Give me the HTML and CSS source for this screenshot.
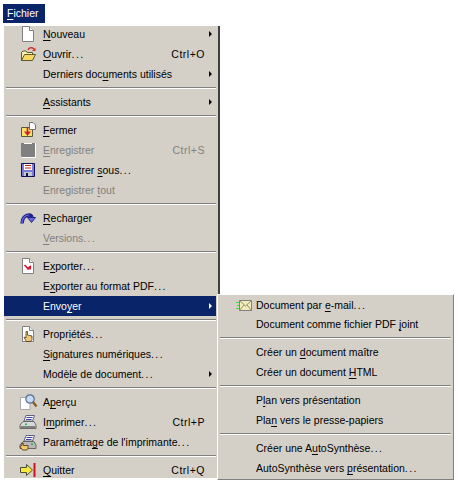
FILE: index.html
```html
<!DOCTYPE html>
<html lang="fr">
<head>
  <meta charset="UTF-8" />
  <title>Fichier</title>
  <link rel="stylesheet" href="styles.css">
</head>
<body>
  <div class="menubar"><span class="menubar-item"><u>F</u>ichier</span></div>

  <div class="menu">
    <div class="row">
      <svg class="icon" viewBox="0 0 16 16"><path d="M2.5.5H9.5L13.5 4.5V15.5H2.5Z" fill="#fff" stroke="#808080"/><path d="M9.5.5V4.5H13.5" fill="#eee" stroke="#808080"/></svg>
      <span class="label"><u>N</u>ouveau</span><i class="arrow"></i>
    </div>
    <div class="row">
      <svg class="icon" viewBox="0 0 16 16"><path d="M1.5 14.5V6.5L3 5H6L7 6.5H12.5V8.5" fill="#fff3b0" stroke="#5a5a30"/><path d="M1.5 14.5L4.5 8.5H15.5L12.5 14.5Z" fill="#f6d860" stroke="#5a5a30"/><path d="M8 4C9 1.5 12 1 14 3" fill="none" stroke="#d03030" stroke-width="1.4"/><path d="M15.5 1.5V5H12Z" fill="#d03030"/></svg>
      <span class="label"><u>O</u>uvrir<span class="dots">...</span></span><span class="shortcut">Ctrl+O</span>
    </div>
    <div class="row">
      <span class="icon"></span>
      <span class="label">Derniers doc<u>u</u>ments utilisés</span><i class="arrow"></i>
    </div>
    <div class="sep"></div>
    <div class="row">
      <span class="icon"></span>
      <span class="label"><u>A</u>ssistants</span><i class="arrow"></i>
    </div>
    <div class="sep"></div>
    <div class="row">
      <svg class="icon" viewBox="0 0 16 16"><path d="M1.5 14.5V5.5H12.5V14.5Z" fill="#f6e070" stroke="#5a5a30"/><path d="M9.5 .5H13L15.5 3V7.5H9.5Z" fill="#fff" stroke="#707070"/><path d="M7.5 5V11.5" stroke="#d02020" stroke-width="1.6"/><path d="M4 9.5H11L7.5 14Z" fill="#d02020"/></svg>
      <span class="label"><u>F</u>ermer</span>
    </div>
    <div class="row disabled">
      <svg class="icon" viewBox="0 0 16 16"><path d="M1 1H15V15H2L1 14Z" fill="#808080"/><path d="M4 1.5H12" stroke="#fff"/><path d="M15.5 1V15.5H2" fill="none" stroke="#fff"/></svg>
      <span class="label"><u>E</u>nregistrer</span><span class="shortcut">Ctrl+S</span>
    </div>
    <div class="row">
      <svg class="icon" viewBox="0 0 16 16"><path d="M1.5 1.5H14.5V14.5H1.5Z" fill="#7c7cd8" stroke="#101050"/><path d="M4 2H12V8H4Z" fill="#fff"/><path d="M5 3.5H11M5 6H11" stroke="#d02020"/><path d="M4 10H12V14H4Z" fill="#c8c8c8"/><path d="M6 11H8V14H6Z" fill="#101050"/></svg>
      <span class="label">Enregistrer <u>s</u>ous<span class="dots">...</span></span>
    </div>
    <div class="row disabled">
      <span class="icon"></span>
      <span class="label">Enregistrer <u>t</u>out</span>
    </div>
    <div class="sep"></div>
    <div class="row">
      <svg class="icon" viewBox="0 0 16 16"><path d="M2 13.5C2 8 5.5 5 9 5C11 5 12 6 12 8" fill="none" stroke="#22228c" stroke-width="3.4"/><path d="M2 13.5C2 8 5.5 5 9 5" fill="none" stroke="#6a6ae0" stroke-width="1.2"/><path d="M7.5 7.5H15.5L11.5 12.5Z" fill="#6a6ae0" stroke="#22228c"/></svg>
      <span class="label"><u>R</u>echarger</span>
    </div>
    <div class="row disabled">
      <span class="icon"></span>
      <span class="label"><u>V</u>ersions<span class="dots">...</span></span>
    </div>
    <div class="sep"></div>
    <div class="row">
      <svg class="icon" viewBox="0 0 16 16"><path d="M2.5.5H9.5L13.5 4.5V15.5H2.5Z" fill="#fff" stroke="#808080"/><path d="M9.5.5V4.5H13.5" fill="#eee" stroke="#808080"/><path d="M4.5 7L8 10.5L10 8.5" fill="none" stroke="#e01030" stroke-width="1.6"/><path d="M11 7V11.5H6.5Z" fill="#e01030"/></svg>
      <span class="label">E<u>x</u>porter<span class="dots">...</span></span>
    </div>
    <div class="row">
      <span class="icon"></span>
      <span class="label">E<u>x</u>porter au format PDF<span class="dots">...</span></span>
    </div>
    <div class="row active">
      <span class="icon"></span>
      <span class="label">Envo<u>y</u>er</span><i class="arrow"></i>
    </div>
    <div class="sep"></div>
    <div class="row">
      <svg class="icon" viewBox="0 0 16 16"><path d="M2.5.5H9.5L13.5 4.5V15.5H2.5Z" fill="#fff" stroke="#808080"/><path d="M9.5.5V4.5H13.5" fill="#eee" stroke="#808080"/><path d="M6 8V5.5H7.5V9L12 10V13.5L10.5 15.5H6.5L4 11.5L5 11L6 12Z" fill="#f2c878" stroke="#302010" stroke-width=".7"/></svg>
      <span class="label">Propr<u>i</u>étés<span class="dots">...</span></span>
    </div>
    <div class="row">
      <span class="icon"></span>
      <span class="label"><u>S</u>ignatures numériques<span class="dots">...</span></span>
    </div>
    <div class="row">
      <span class="icon"></span>
      <span class="label">Modè<u>l</u>e de document<span class="dots">...</span></span><i class="arrow"></i>
    </div>
    <div class="sep"></div>
    <div class="row">
      <svg class="icon" viewBox="0 0 16 16"><path d="M.5 3.500H10V15.500H.5Z" fill="#fff" stroke="#a8a8a8"/><circle cx="10" cy="5" r="4.200" fill="#c4ddf6" stroke="#5a6a90" stroke-width="1.200"/><path d="M13 8L16.500 12.500" stroke="#806030" stroke-width="2.400"/></svg>
      <span class="label">A<u>p</u>erçu</span>
    </div>
    <div class="row">
      <svg class="icon" viewBox="0 0 16 16"><path d="M6 1.500H14.500L12.500 7H4Z" fill="#fff" stroke="#606080"/><path d="M6.500 3.500H12.500M6 5.500H11.500" stroke="#4040a0"/><path d="M3 7.500H14L16 11V14.500H0V11Z" fill="#d8d8d8" stroke="#505050" stroke-width=".8"/><path d="M.5 12H15.500V14H.5Z" fill="#808080"/><path d="M5 9.500H7V11H5Z" fill="#10c040"/></svg>
      <span class="label">I<u>m</u>primer<span class="dots">...</span></span><span class="shortcut">Ctrl+P</span>
    </div>
    <div class="row">
      <svg class="icon" viewBox="0 0 16 16"><path d="M6 1.500H14.500L12.500 7H4Z" fill="#fff" stroke="#606080"/><path d="M6.500 3.500H12.500M6 5.500H11.500" stroke="#4040a0"/><path d="M3 7.500H14L16 11V14.500H0V11Z" fill="#b8b8b8" stroke="#505050" stroke-width=".8"/><path d="M11 9.500H13V11H11Z" fill="#10c040"/><path d="M2 11V9H3.200V11.500H8V14.500L7 16H2.500L0 12.500L1 12Z" fill="#f6c860" stroke="#302010" stroke-width=".7"/></svg>
      <span class="label">Paramétra<u>g</u>e de l'imprimante<span class="dots">...</span></span>
    </div>
    <div class="sep"></div>
    <div class="row">
      <svg class="icon" viewBox="0 0 16 16"><path d="M.5 5.500H6.500V2.500L12.500 8L6.500 13.500V10.500H.5Z" fill="#f8e840" stroke="#505030"/><path d="M14.500 1V15" stroke="#d01020" stroke-width="2"/></svg>
      <span class="label"><u>Q</u>uitter</span><span class="shortcut">Ctrl+Q</span>
    </div>
  </div>

  <div class="menu submenu">
    <div class="row">
      <svg class="icon" viewBox="0 0 16 16"><path d="M3.500 3.500H15.500V13.500H3.500Z" fill="#f4ecb8" stroke="#808080"/><path d="M3.500 3.500L9.500 9L15.500 3.500M3.500 13.500L8 8M15.500 13.500L11 8" fill="none" stroke="#909070"/><path d="M0 5.500H3M1 8.500H3M0 11.500H3" stroke="#40e040"/></svg>
      <span class="label">Document par <u>e</u>-mail<span class="dots">...</span></span>
    </div>
    <div class="row">
      <span class="icon"></span>
      <span class="label">Document comme fichier PDF <u>j</u>oint</span>
    </div>
    <div class="sep"></div>
    <div class="row">
      <span class="icon"></span>
      <span class="label">Créer un <u>d</u>ocument maître</span>
    </div>
    <div class="row">
      <span class="icon"></span>
      <span class="label">Créer un document <u>H</u>TML</span>
    </div>
    <div class="sep"></div>
    <div class="row">
      <span class="icon"></span>
      <span class="label">P<u>l</u>an vers présentation</span>
    </div>
    <div class="row">
      <span class="icon"></span>
      <span class="label">Pla<u>n</u> vers le presse-papiers</span>
    </div>
    <div class="sep"></div>
    <div class="row">
      <span class="icon"></span>
      <span class="label">Créer une A<u>u</u>toSynthèse<span class="dots">...</span></span>
    </div>
    <div class="row">
      <span class="icon"></span>
      <span class="label">AutoSynthèse vers <u>p</u>résentation<span class="dots">...</span></span>
    </div>
  </div>
</body>
</html>
```

FILE: styles.css
```css
* { box-sizing: border-box; margin: 0; padding: 0; }
html, body { height: 100%; }
body {
  font-family: "Liberation Sans", sans-serif;
  font-size: 10.5px;
  color: #000;
  background: #fff;
  overflow: hidden;
  position: relative;
}
u { text-decoration-skip-ink: none; text-underline-offset: 2px; }
.dots { letter-spacing: 1.4px; }

.menubar { padding: 4px 0 0 3px; height: 26px; }
.menubar-item {
  display: block;
  width: 42px;
  height: 19px;
  padding-left: 4px;
  line-height: 18px;
  background: #0a246a;
  color: #fff;
}

.menu {
  width: 214px;
  margin-left: 4px;
  background: #d4d0c8;
  border-right: 2px solid #404040;
  box-sizing: content-box;
  height: 452px;
}
.row {
  display: flex;
  align-items: center;
  height: 20px;
  padding: 0 11px 0 16px;
  width: 212px;
  white-space: nowrap;
}
.menu > .row:first-child { height: 18px; padding-bottom: 2px; }
.menu > .row:last-child { height: 18px; padding-top: 2px; }
.icon { width: 16px; height: 16px; flex: none; margin-right: 7px; display: block; overflow: visible; }
.label { flex: 1; }
.shortcut { flex: none; letter-spacing: .5px; }
.arrow {
  flex: none;
  width: 0; height: 0;
  margin-right: -7px;
  border-left: 3px solid #000;
  border-top: 3px solid transparent;
  border-bottom: 3px solid transparent;
}
.disabled { color: #808080; }
.active { background: #0a246a; color: #fff; }
.active .arrow { border-left-color: #fff; }
.sep {
  height: 2px;
  margin: 3px 3px 3px 2px;
  width: 210px;
  background: #808080;
  border-bottom: 1px solid #fff;
}

/* opens over the main menu, next to Envoyer */
.submenu {
  position: absolute;
  left: 217px;
  top: 294px;
  width: 237px;
  height: 186px;
  margin: 0;
  border: 0;
  border-top: 1px solid #fff;
  border-left: 1px solid #fff;
  border-right: 1px solid #808080;
  border-bottom: 1px solid #808080;
  box-sizing: border-box;
}
.submenu .row { width: 234px; padding-left: 18px; }
.submenu > .row:first-child { height: 19px; padding-bottom: 0; }
.submenu > .row:last-child { height: 20px; padding-top: 0; }
.submenu .icon { margin-right: 4px; }
.submenu .sep { margin: 3px 2px; width: 231px; }
```
